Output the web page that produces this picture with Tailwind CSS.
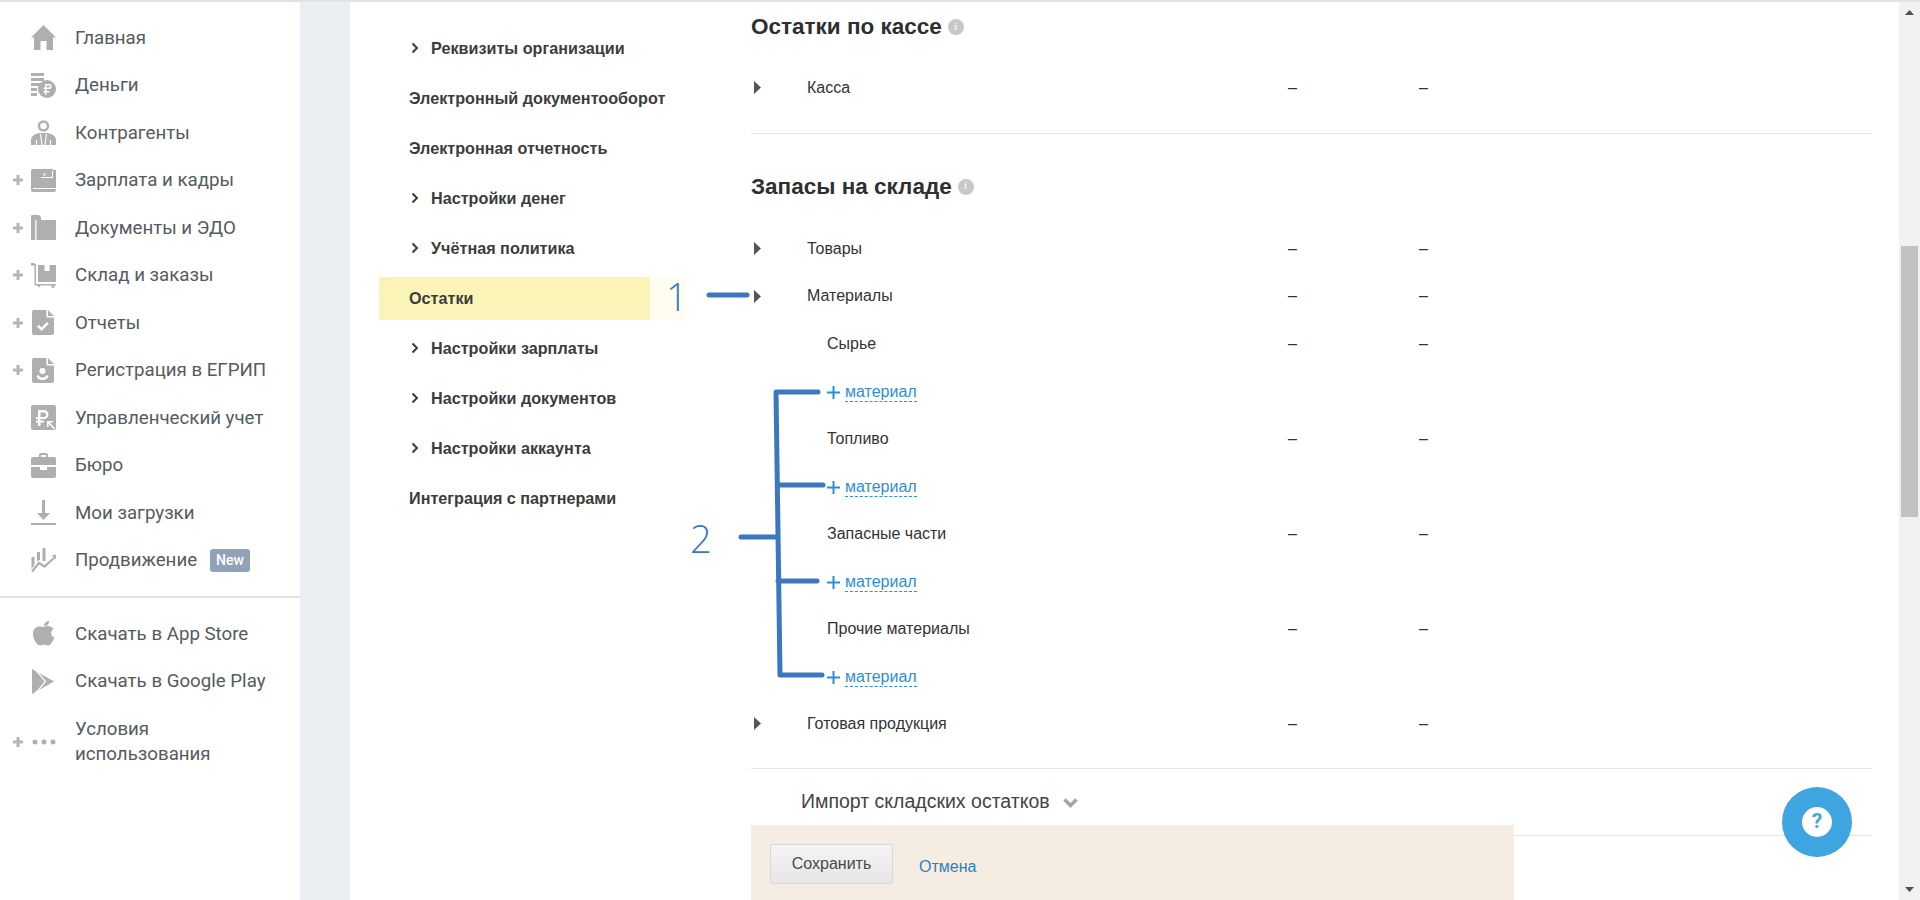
<!DOCTYPE html>
<html lang="ru">

<head>
    <meta charset="UTF-8">
    <meta name="viewport" content="width=device-width, initial-scale=1.0">
    <script src="https://cdn.jsdelivr.net/npm/@tailwindcss/browser@4"></script>
    <title>Остатки</title>
</head>

<body class="h-[900px] overflow-hidden bg-white font-['Liberation_Sans',sans-serif]">
    <div class="relative flex h-[900px] border-t-2 border-[#e2e2e2]">

        <!-- sidebar -->
        <aside class="w-[300px] shrink-0 pt-[12px] font-['Roboto',sans-serif] text-[18.7px] text-[#555b62]">
            <a class="flex h-[47.5px] items-center"><span class="w-[31px]"></span>
                <svg class="w-[25px] h-[25px] mr-[19px] fill-[#afafaf]" viewBox="0 0 25 25"><path d="M12.5 0 L25 12.5 L22 12.5 L22 25 L15.5 25 L15.5 16 L9.5 16 L9.5 25 L3 25 L3 12.5 L0 12.5 Z"/></svg>Главная</a>
            <a class="flex h-[47.5px] items-center"><span class="w-[31px]"></span>
                <svg class="w-[25px] h-[25px] mr-[19px] fill-[#afafaf]" viewBox="0 0 25 25"><path d="M0 0h13v3H0zM0 5h13v3H0zM0 10h9v3H0zM0 15h6v3H0zM0 20h6v3H0z"/><circle cx="16" cy="16" r="9"/><path d="M14 11h4a2.500 2.500 0 0 1 0 5h-2.500v2h3v1.500h-3V22H14v-2.500h-1.500V18H14v-2h-1.500v-1.500H14zM15.500 12.500v2H18a1 1 0 0 0 0-2z" fill="#fff"/></svg>Деньги</a>
            <a class="flex h-[47.5px] items-center"><span class="w-[31px]"></span>
                <svg class="w-[25px] h-[25px] mr-[19px] fill-[#afafaf]" viewBox="0 0 25 25"><circle cx="12.500" cy="6" r="4.500" fill="none" stroke="#afafaf" stroke-width="2.500"/><path d="M0 25v-5c0-4 4-6 8-7h9c4 1 8 3 8 7v5z"/><path d="M5.500 20v5M19.500 20v5M9.500 14l1.500 11M15.500 14l-1.500 11" stroke="#fff" stroke-width="1.200"/></svg>Контрагенты</a>
            <a class="flex h-[47.5px] items-center"><svg class="ml-[13px] mr-[8px] w-[10px] h-[10px] fill-[#b5b5b5]" viewBox="0 0 10 10"><path d="M3.500 0h3v3.500H10v3H6.500V10h-3V6.500H0v-3h3.500z"/></svg>
                <svg class="w-[25px] h-[25px] mr-[19px] fill-[#afafaf]" viewBox="0 0 25 25"><path d="M2 1h20v1h3v20a2 2 0 0 1-2 2H2a2 2 0 0 1-2-2V3a2 2 0 0 1 2-2z"/><path d="M10 9h11V2.500h1V10H10zM12.500 5.500h2v2h-2zM2 20h23v1H2z" fill="#fff"/></svg>Зарплата и кадры</a>
            <a class="flex h-[47.5px] items-center"><svg class="ml-[13px] mr-[8px] w-[10px] h-[10px] fill-[#b5b5b5]" viewBox="0 0 10 10"><path d="M3.500 0h3v3.500H10v3H6.500V10h-3V6.500H0v-3h3.500z"/></svg>
                <svg class="w-[25px] h-[25px] mr-[19px] fill-[#afafaf]" viewBox="0 0 25 25"><path d="M1 0h7l2 2v3H4.200v20H1a1 1 0 0 1-1-1V1a1 1 0 0 1 1-1z"/><path d="M5.500 5H24a1 1 0 0 1 1 1v18a1 1 0 0 1-1 1H5.500z"/></svg>Документы и ЭДО</a>
            <a class="flex h-[47.5px] items-center"><svg class="ml-[13px] mr-[8px] w-[10px] h-[10px] fill-[#b5b5b5]" viewBox="0 0 10 10"><path d="M3.500 0h3v3.500H10v3H6.500V10h-3V6.500H0v-3h3.500z"/></svg>
                <svg class="w-[25px] h-[25px] mr-[19px] fill-[#afafaf]" viewBox="0 0 25 25"><path d="M0 0h3l2 1.500V21h20v1.500H9.500a1.500 1.500 0 1 1-3 0H3.500V2.500H0z"/><path d="M7 2h18v17H7zM13.500 2v6h5V2z" fill-rule="evenodd"/><circle cx="22" cy="23.300" r="1.600"/></svg>Склад и заказы</a>
            <a class="flex h-[47.5px] items-center"><svg class="ml-[13px] mr-[8px] w-[10px] h-[10px] fill-[#b5b5b5]" viewBox="0 0 10 10"><path d="M3.500 0h3v3.500H10v3H6.500V10h-3V6.500H0v-3h3.500z"/></svg>
                <svg class="w-[25px] h-[25px] mr-[19px] fill-[#afafaf]" viewBox="0 0 25 25"><path d="M3 0h12.500v7.500H23V23a2 2 0 0 1-2 2H3a2 2 0 0 1-2-2V2a2 2 0 0 1 2-2zM17 0l6 6h-6z"/><path d="M6 16.500l1.800-1.800 2.700 2.700 5.500-5.500 1.800 1.800-7.300 7.300z" fill="#fff"/></svg>Отчеты</a>
            <a class="flex h-[47.5px] items-center"><svg class="ml-[13px] mr-[8px] w-[10px] h-[10px] fill-[#b5b5b5]" viewBox="0 0 10 10"><path d="M3.500 0h3v3.500H10v3H6.500V10h-3V6.500H0v-3h3.500z"/></svg>
                <svg class="w-[25px] h-[25px] mr-[19px] fill-[#afafaf]" viewBox="0 0 25 25"><path d="M3 0h12.500v7.500H23V23a2 2 0 0 1-2 2H3a2 2 0 0 1-2-2V2a2 2 0 0 1 2-2zM17 0l6 6h-6z"/><circle cx="11.500" cy="13" r="3" fill="#fff"/><path d="M5.500 18c1 3 3.500 4 6 4s5-1 6-4l-2-1c-1 2-2.500 2.500-4 2.500s-3-.5-4-2.500z" fill="#fff"/></svg>Регистрация в ЕГРИП</a>
            <a class="flex h-[47.5px] items-center"><span class="w-[31px]"></span>
                <svg class="w-[25px] h-[25px] mr-[19px] fill-[#afafaf]" viewBox="0 0 25 25"><rect width="25" height="25" rx="2"/><path d="M7 5h6a4.500 4.500 0 0 1 0 9h-3.500v1.500H13v2H9.500V21H7v-3.500H5v-2h2V14H5v-2h2zM9.500 7.500V12H13a2.200 2.200 0 0 0 0-4.500zM16 16h6v1.500h-3.500L24 23l-1.200 1.200-5.300-5.400V22H16z" fill="#fff"/></svg>Управленческий учет</a>
            <a class="flex h-[47.5px] items-center"><span class="w-[31px]"></span>
                <svg class="w-[25px] h-[25px] mr-[19px] fill-[#afafaf]" viewBox="0 0 25 25"><path d="M8 4V2a2 2 0 0 1 2-2h5a2 2 0 0 1 2 2v2h6a2 2 0 0 1 2 2v6H0V6a2 2 0 0 1 2-2zM10 2v2h5V2zM0 14h9v3h7v-3h9v9a2 2 0 0 1-2 2H2a2 2 0 0 1-2-2z"/></svg>Бюро</a>
            <a class="flex h-[47.5px] items-center"><span class="w-[31px]"></span>
                <svg class="w-[25px] h-[25px] mr-[19px] fill-[#afafaf]" viewBox="0 0 25 25"><path d="M11 0h3v13h5l-6.500 7L6 13h5zM0 23h25v2H0z"/></svg>Мои загрузки</a>
            <a class="flex h-[47.5px] items-center"><span class="w-[31px]"></span>
                <svg class="w-[25px] h-[25px] mr-[19px] fill-[#afafaf]" viewBox="0 0 25 25"><path d="M.500 9h3v12h-3zM6 4h3v12H6zM11.500 0h3v13h-3zM20.500 7.500l4.500-1v5l-1.500-1.400z"/><path d="M1 23.500 8 15l5.500 3.500L23 10" fill="none" stroke="#fff" stroke-width="4.500"/><path d="M1 23.500 8 15l5.500 3.500L23 10" fill="none" stroke="#afafaf" stroke-width="2.200"/></svg>Продвижение<span class="ml-[13px] rounded-[3px] bg-[#8fa2b8] px-[6px] text-[14px] leading-[23px] font-medium text-white">New</span></a>

            <div class="mt-[11.500px] mb-[12.500px] border-t-2 border-[#e2e2e2]"></div>

            <a class="flex h-[47.5px] items-center"><span class="w-[31px]"></span>
                <svg class="w-[25px] h-[25px] mr-[19px] fill-[#afafaf]" viewBox="0 0 25 25"><path d="M13 6c2-1 5-1.500 7.500 0 1 .6 1.500 1.300 2 2-3.500 2-3 7 .7 8.500-1 3-3.500 8-6 8-1.500 0-2.500-1-4-1s-2.700 1-4 1C6 24.500 2 18 2 13c0-5 3-7.500 6-7.500 2 0 3.500.5 5 .5zM13 5c0-2.500 2-5 5-5 .2 3-2 5-5 5z"/></svg>Скачать в App Store</a>
            <a class="flex h-[47.5px] items-center"><span class="w-[31px]"></span>
                <svg class="w-[25px] h-[25px] mr-[19px] fill-[#afafaf]" viewBox="0 0 25 25"><path d="M1 0l22 12.500L1 25z"/><path d="M3 -1 14.500 12.500 3 26" fill="none" stroke="#fff" stroke-width="1.200"/></svg>Скачать в Google Play</a>
            <a class="mt-[12px] flex h-[49px] items-center leading-[24.500px]"><svg class="ml-[13px] mr-[8px] w-[10px] h-[10px] fill-[#b5b5b5]" viewBox="0 0 10 10"><path d="M3.500 0h3v3.500H10v3H6.500V10h-3V6.500H0v-3h3.500z"/></svg>
                <svg class="w-[25px] h-[6px] mr-[19px] fill-[#afafaf]" viewBox="0 0 25 6"><circle cx="4" cy="3" r="2.500"/><circle cx="13" cy="3" r="2.500"/><circle cx="22" cy="3" r="2.500"/></svg><span>Условия<br>использования</span></a>
        </aside>

        <div class="w-[50px] shrink-0 bg-[#ebeff3]"></div>

        <!-- settings menu -->
        <nav class="w-[401px] shrink-0 pl-[29px] pt-[21px] text-[16.200px] font-bold text-[#3c3c3c]">
            <a class="flex h-[50px] w-[271px] items-center pl-[32px]"><svg class="w-[8px] h-[12px] mr-[12px] fill-none stroke-[#3c3c3c] stroke-2" viewBox="0 0 8 12"><path d="M1.500 1.500 6 6l-4.500 4.500"/></svg>Реквизиты организации</a>
            <a class="flex h-[50px] w-[271px] items-center pl-[30px] whitespace-nowrap">Электронный документооборот</a>
            <a class="flex h-[50px] w-[271px] items-center pl-[30px]">Электронная отчетность</a>
            <a class="flex h-[50px] w-[271px] items-center pl-[32px]"><svg class="w-[8px] h-[12px] mr-[12px] fill-none stroke-[#3c3c3c] stroke-2" viewBox="0 0 8 12"><path d="M1.500 1.500 6 6l-4.500 4.500"/></svg>Настройки денег</a>
            <a class="flex h-[50px] w-[271px] items-center pl-[32px]"><svg class="w-[8px] h-[12px] mr-[12px] fill-none stroke-[#3c3c3c] stroke-2" viewBox="0 0 8 12"><path d="M1.500 1.500 6 6l-4.500 4.500"/></svg>Учётная политика</a>
            <div class="flex my-[3.500px]">
                <a class="flex h-[43px] w-[271px] items-center bg-[#faf4b9] pl-[30px]">Остатки</a>
                <div class="h-[43px] w-[36px] bg-[#fffdf0]"></div>
            </div>
            <a class="flex h-[50px] w-[271px] items-center pl-[32px]"><svg class="w-[8px] h-[12px] mr-[12px] fill-none stroke-[#3c3c3c] stroke-2" viewBox="0 0 8 12"><path d="M1.500 1.500 6 6l-4.500 4.500"/></svg>Настройки зарплаты</a>
            <a class="flex h-[50px] w-[271px] items-center pl-[32px]"><svg class="w-[8px] h-[12px] mr-[12px] fill-none stroke-[#3c3c3c] stroke-2" viewBox="0 0 8 12"><path d="M1.500 1.500 6 6l-4.500 4.500"/></svg>Настройки документов</a>
            <a class="flex h-[50px] w-[271px] items-center pl-[32px]"><svg class="w-[8px] h-[12px] mr-[12px] fill-none stroke-[#3c3c3c] stroke-2" viewBox="0 0 8 12"><path d="M1.500 1.500 6 6l-4.500 4.500"/></svg>Настройки аккаунта</a>
            <a class="flex h-[50px] w-[271px] items-center pl-[30px]">Интеграция с партнерами</a>
        </nav>

        <!-- balances -->
        <main class="w-[1121px] shrink-0 text-[16px] text-[#333]">
            <h2 class="flex h-[50px] items-center text-[22.500px] font-bold text-[#2f2f2f]">Остатки по кассе<span class="ml-[6px] flex h-[16px] w-[16px] items-center justify-center rounded-full bg-[#c8c8c8] font-serif text-[11px] italic font-normal text-white">i</span></h2>
            <div class="mt-[12px] grid h-[47.500px] grid-cols-[3px_7px_46px_481px_131px_1fr] items-center"><span></span><svg class="h-[13px] w-[7px] fill-[#555]" viewBox="0 0 7 13"><path d="M0 0l7 6.500L0 13z"/></svg><span></span><span>Касса</span><span>–</span><span>–</span></div>
            <div class="mt-[21px] border-t border-[#e4e4e4]"></div>

            <h2 class="mt-[28px] flex h-[50px] items-center text-[22.500px] font-bold text-[#2f2f2f]">Запасы на складе<span class="ml-[6px] flex h-[16px] w-[16px] items-center justify-center rounded-full bg-[#c8c8c8] font-serif text-[11px] italic font-normal text-white">i</span></h2>

            <div class="mt-[13.500px] grid h-[47.500px] grid-cols-[3px_7px_46px_481px_131px_1fr] items-center"><span></span><svg class="h-[13px] w-[7px] fill-[#555]" viewBox="0 0 7 13"><path d="M0 0l7 6.500L0 13z"/></svg><span></span><span>Товары</span><span>–</span><span>–</span></div>
            <div class="grid h-[47.500px] grid-cols-[3px_7px_46px_481px_131px_1fr] items-center"><span></span><svg class="h-[13px] w-[7px] fill-[#555]" viewBox="0 0 7 13"><path d="M0 0l7 6.500L0 13z"/></svg><span></span><span>Материалы</span><span>–</span><span>–</span></div>

            <div class="grid h-[47.500px] grid-cols-[76px_461px_131px_1fr] items-center"><span></span><span>Сырье</span><span>–</span><span>–</span></div>
            <div class="flex h-[47.500px] items-center pl-[76px] pt-[2px]"><svg class="mr-[5px] h-[13px] w-[13px] fill-[#2b8fd4]" viewBox="0 0 13 13"><path d="M5.500 0h2v5.500H13v2H7.500V13h-2V7.500H0v-2h5.500z"/></svg><a class="border-b border-dashed border-[#2b8fd4] leading-[18px] text-[#2b8fd4]">материал</a></div>
            <div class="grid h-[47.500px] grid-cols-[76px_461px_131px_1fr] items-center"><span></span><span>Топливо</span><span>–</span><span>–</span></div>
            <div class="flex h-[47.500px] items-center pl-[76px] pt-[2px]"><svg class="mr-[5px] h-[13px] w-[13px] fill-[#2b8fd4]" viewBox="0 0 13 13"><path d="M5.500 0h2v5.500H13v2H7.500V13h-2V7.500H0v-2h5.500z"/></svg><a class="border-b border-dashed border-[#2b8fd4] leading-[18px] text-[#2b8fd4]">материал</a></div>
            <div class="grid h-[47.500px] grid-cols-[76px_461px_131px_1fr] items-center"><span></span><span>Запасные части</span><span>–</span><span>–</span></div>
            <div class="flex h-[47.500px] items-center pl-[76px] pt-[2px]"><svg class="mr-[5px] h-[13px] w-[13px] fill-[#2b8fd4]" viewBox="0 0 13 13"><path d="M5.500 0h2v5.500H13v2H7.500V13h-2V7.500H0v-2h5.500z"/></svg><a class="border-b border-dashed border-[#2b8fd4] leading-[18px] text-[#2b8fd4]">материал</a></div>
            <div class="grid h-[47.500px] grid-cols-[76px_461px_131px_1fr] items-center"><span></span><span>Прочие материалы</span><span>–</span><span>–</span></div>
            <div class="flex h-[47.500px] items-center pl-[76px] pt-[2px]"><svg class="mr-[5px] h-[13px] w-[13px] fill-[#2b8fd4]" viewBox="0 0 13 13"><path d="M5.500 0h2v5.500H13v2H7.500V13h-2V7.500H0v-2h5.500z"/></svg><a class="border-b border-dashed border-[#2b8fd4] leading-[18px] text-[#2b8fd4]">материал</a></div>

            <div class="grid h-[47.500px] grid-cols-[3px_7px_46px_481px_131px_1fr] items-center"><span></span><svg class="h-[13px] w-[7px] fill-[#555]" viewBox="0 0 7 13"><path d="M0 0l7 6.500L0 13z"/></svg><span></span><span>Готовая продукция</span><span>–</span><span>–</span></div>

            <div class="mt-[20px] flex h-[68px] items-center border-y border-[#e4e4e4] pl-[50px] text-[19.500px] text-[#444]">Импорт складских остатков<svg class="ml-[13px] mt-[3px] h-[10px] w-[15px] fill-none stroke-[#a5a5a5] stroke-[3.500]" viewBox="0 0 15 10"><path d="M1.500 1.500 7.500 7.500l6-6"/></svg></div>
        </main>

        <!-- scrollbar -->
        <div class="absolute top-0 right-0 bottom-0 w-[21px] bg-[#f1f1f1]">
            <svg class="absolute top-[8px] left-[6px] h-[5px] w-[9px] fill-[#505050]" viewBox="0 0 9 5"><path d="M4.500 0 9 5H0z"/></svg>
            <div class="absolute top-[244px] left-[2px] h-[271px] w-[17px] bg-[#c1c1c1]"></div>
            <svg class="absolute bottom-[8px] left-[6px] h-[5px] w-[9px] fill-[#505050]" viewBox="0 0 9 5"><path d="M0 0h9L4.500 5z"/></svg>
        </div>

        <!-- sticky save bar -->
        <div class="absolute left-[751px] bottom-0 flex h-[75px] w-[763px] items-start gap-[26px] bg-[#f5ede1] pl-[19px] pt-[19px] text-[16px]">
            <button class="h-[40px] w-[123px] rounded-[2px] border border-[#d8d8d8] bg-gradient-to-b from-[#f4f4f4] to-[#e6e6e6] text-[#4a4a4a]">Сохранить</button>
            <a class="mt-[11px] text-[#2b80c5]">Отмена</a>
        </div>

        <!-- help button -->
        <div class="absolute left-[1782px] top-[785px] flex h-[70px] w-[70px] items-center justify-center rounded-full bg-[#3fa5e0]">
            <span class="flex h-[30px] w-[30px] items-center justify-center rounded-full bg-white font-['Roboto',sans-serif] text-[21px] font-bold text-[#3fa5e0]">?</span>
        </div>

        <!-- annotations drawn over the screenshot -->
        <svg class="pointer-events-none absolute left-0 -top-[2px] h-[900px] w-[1920px] fill-none stroke-[#3a78bf] stroke-[5]" viewBox="0 0 1920 900" stroke-linecap="round">
            <path d="M709 295h38M776 392l4 283M778 392h40M778 485h45M778 581h39M780 675h42M741 537h36"/>
        </svg>
        <span class="absolute left-[666px] top-[274px] font-['Open_Sans',sans-serif] text-[38px] leading-[40px] font-light text-[#3a78bf]">1</span>
        <span class="absolute left-[690px] top-[516px] font-['Open_Sans',sans-serif] text-[38px] leading-[40px] font-light text-[#3a78bf]">2</span>
    </div>
</body>

</html>
